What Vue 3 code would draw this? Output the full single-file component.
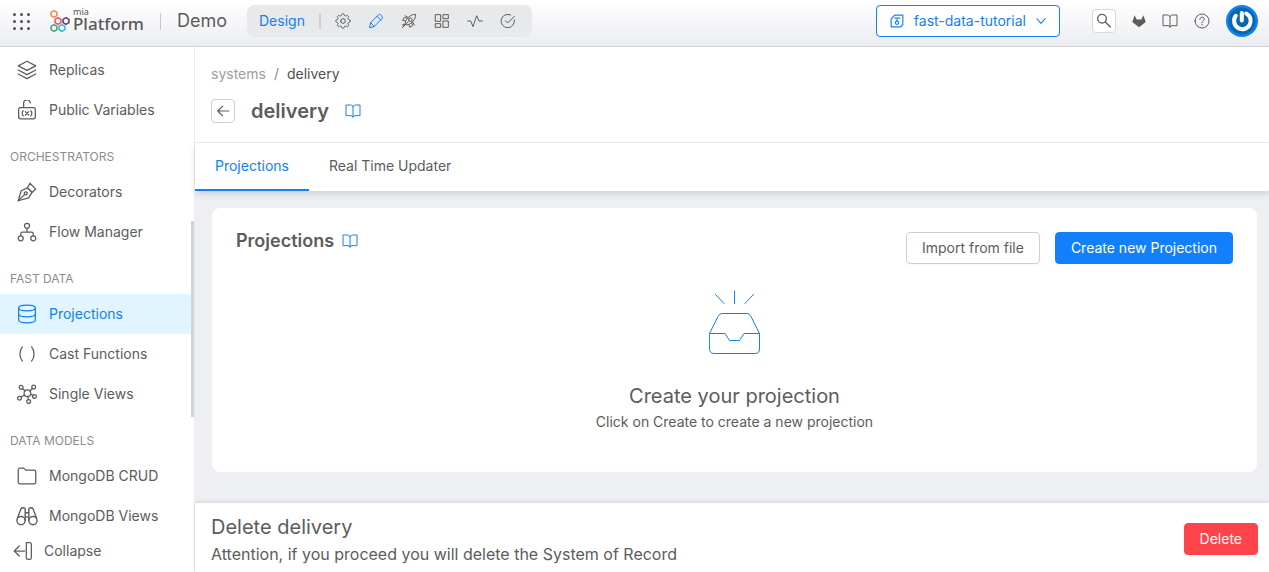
<script setup>
import { h } from 'vue'

const circle = (cx, cy, r) => `M${cx - r} ${cy}a${r} ${r} 0 1 0 ${2 * r} 0a${r} ${r} 0 1 0 ${-2 * r} 0z`

const cog = () => {
  const points = []
  for (let i = 0; i < 96; i++) {
    const t = (i / 96) * Math.PI * 2
    const r = 9.6 + 1.3 * Math.tanh(2 * Math.cos(8 * t))
    points.push(`${(12 + r * Math.cos(t)).toFixed(2)} ${(12 + r * Math.sin(t)).toFixed(2)}`)
  }
  return `M${points.join('L')}z`
}

const glyphs = {
  gear: [cog(), circle(12, 12, 3.5)],
  pencil: ['M2.500 21.500l1.500-7L15.500 3a2.500 2.500 0 0 1 3.500 0l2 2a2.500 2.500 0 0 1 0 3.500L9.500 20z', 'M13.500 5l5.500 5.500', 'M4 14.500l5.500 5.500'],
  rocket: ['M6.500 17.500c-1-3 .5-7 4-10.500C14 3.500 18 2 22 2c0 4-1.500 8-5 11.500-3.500 3.500-7.500 5-10.500 4z', circle(14, 10, 2.6), 'M9.500 8L5 6.500 2.500 11l4 1', 'M16 14.500l1.500 4.500-4.500 2.500-1-4', 'M6 4l5 3M20 18l-3-5', 'M2 22l4-4', 'M8 16l3-3', circle(4.200, 18, 1.200)],
  grid: ['M2.500 2.500h7.500v10H2.500z', 'M14 2.500h7.500v6H14z', 'M14 12h7.500v9.500H14z', 'M2.500 16h7.500v5.500H2.500z'],
  pulse: ['M1 12h4.500L9 20.500 14.500 4l3.500 8h5'],
  check: ['M21.500 10.500A10 10 0 1 1 16 3', 'M8 11.500l3.500 3.500L21.500 5'],
  revision: ['M2 8.500L8 2h14v16l-3.500 4H2z', 'M8 7h9', circle(12, 15, 2.800), 'M12 9.500v2.700'],
  chevron: ['M2 6.500l10 11 10-11'],
  search: [circle(9, 8.500, 6.500), 'M14 13.500L21.500 21'],
  book: ['M12 5C11 3.500 9.500 3 8 3H1.500v16H9c1.500 0 2.500.7 3 2 .5-1.300 1.500-2 3-2h7.500V3H16c-1.500 0-3 .5-4 2z', 'M12 5V21.500'],
  help: [circle(12, 12, 10.500), 'M8.800 9.500c0-2 1.400-3.300 3.300-3.300s3.300 1.300 3.300 3c0 2.500-3.300 2.500-3.300 5', 'M12 16.500v1.500'],
  layers: ['M12 1.500l10.500 5.500L12 12.500 1.500 7z', 'M1.500 12L12 17.500l10.500-5.500', 'M1.500 16.800L12 22.300l10.500-5.500'],
  lock: ['M4 9h16a2 2 0 0 1 2 2v9a2.500 2.500 0 0 1-2.500 2.500h-15A2.500 2.500 0 0 1 2 20v-9a2 2 0 0 1 2-2z', 'M8 9V4.500a4 4 0 0 1 8-1', 'M7.500 13c-1.700 1.500-1.700 4.500 0 6M16.500 13c1.700 1.500 1.700 4.500 0 6', 'M10 14l4 4M14 14l-4 4'],
  pen: ['M1.500 22.500L5 10.500l7.500-3.500 5.500 5.500-4 6.500z', circle(10.500, 13.500, 1.800), 'M1.500 22.500l7.700-7.700', 'M12.500 7l3-5.500 7 7-4.500 4z'],
  flow: [circle(12, 4.500, 3), circle(4.500, 19.500, 3), circle(19.500, 19.500, 3), 'M12 7.500v4.500M4.500 16.500V14a2 2 0 0 1 2-2h11a2 2 0 0 1 2 2v2.500'],
  database: ['M2 4.800C2 .3 22 .3 22 4.800S2 9.300 2 4.800z', 'M2 4.800v14.400c0 4.500 20 4.500 20 0V4.800', 'M2 12c0 4.500 20 4.500 20 0'],
  parens: ['M6.500 3.500c-4 5-4 12 0 17', 'M17.500 3.500c4 5 4 12 0 17'],
  network: [circle(12.500, 11, 4), circle(5, 4, 2.300), circle(20, 3.500, 2.300), circle(3, 17, 2.300), circle(21, 15, 2.300), circle(14, 21, 2.300), 'M6.700 5.600L9.700 8.200M18.500 5.400l-3 3M5 15.700l4-2.500M16.300 12.300l2.800 1.400M13 15l.6 3.700'],
  folder: ['M1.500 4.500a2 2 0 0 1 2-2H8L10.500 5H20.500a2 2 0 0 1 2 2v12.500a2 2 0 0 1-2 2h-17a2 2 0 0 1-2-2z'],
  binoculars: [circle(5.500, 17, 4.500), circle(18.500, 17, 4.500), 'M1.500 14.500L5.500 4c.5-1.300 4.500-1.300 4.500 0v13M22.500 14.500L18.500 4c-.5-1.300-4.500-1.300-4.500 0v13M10 8.500h4M10 13h4'],
  collapse: ['M14 12H1.500M7.500 6l-6 6 6 6', 'M16 2h4a2 2 0 0 1 2 2v16a2 2 0 0 1-2 2h-2a2 2 0 0 1-2-2z'],
  back: ['M22 12H3M11.500 3.500L3 12l8.500 8.500'],
}

const Icon = (props) =>
  h('svg', { viewBox: '0 0 24 24', 'aria-hidden': 'true' }, glyphs[props.name].map((d) => h('path', { d })))
Icon.props = ['name']

const areas = [
  { icon: 'gear', label: 'Settings' },
  { icon: 'pencil', label: 'Design', active: true },
  { icon: 'rocket', label: 'Deploy' },
  { icon: 'grid', label: 'Environments' },
  { icon: 'pulse', label: 'Monitoring' },
  { icon: 'check', label: 'Quality' },
]

const groups = [
  { items: [{ icon: 'layers', label: 'Replicas' }, { icon: 'lock', label: 'Public Variables' }] },
  { title: 'ORCHESTRATORS', items: [{ icon: 'pen', label: 'Decorators' }, { icon: 'flow', label: 'Flow Manager' }] },
  {
    title: 'FAST DATA',
    items: [
      { icon: 'database', label: 'Projections', active: true },
      { icon: 'parens', label: 'Cast Functions' },
      { icon: 'network', label: 'Single Views' },
    ],
  },
  { title: 'DATA MODELS', items: [{ icon: 'folder', label: 'MongoDB CRUD' }, { icon: 'binoculars', label: 'MongoDB Views' }] },
]

const hexagons = [
  { x: 4, y: 4, color: '#f0824f' },
  { x: 8, y: 11, color: '#e8505b' },
  { x: 16, y: 11, color: '#4f3a86' },
  { x: 4, y: 18, color: '#3fa66b' },
  { x: 12, y: 18, color: '#35b4dc' },
]
</script>

<template>
  <div class="shell">
    <header class="topbar">
      <button class="launcher" aria-label="Applications">
        <i v-for="n in 9" :key="n"></i>
      </button>
      <a class="brand" href="#" aria-label="mia Platform">
        <svg class="brand-mark" viewBox="0 0 20 23" aria-hidden="true">
          <path
            v-for="(hex, i) in hexagons"
            :key="i"
            :transform="`translate(${hex.x} ${hex.y})`"
            :stroke="hex.color"
            d="M0-3.300L2.900-1.700V1.700L0 3.300-2.900 1.700V-1.700z"
          />
        </svg>
        <span class="brand-text"><small>mia</small><strong>Platform</strong></span>
      </a>
      <span class="rule"></span>
      <span class="project">Demo</span>
      <nav class="areas" aria-label="Areas">
        <span class="area-name">Design</span>
        <span class="area-rule"></span>
        <a v-for="area in areas" :key="area.icon" href="#" :aria-label="area.label" :class="{ active: area.active }">
          <Icon :name="area.icon" class="icon-16" />
        </a>
      </nav>
      <div class="tools">
        <button class="branch">
          <Icon name="revision" class="icon-14" />
          <span>fast-data-tutorial</span>
          <Icon name="chevron" class="icon-10" />
        </button>
        <button class="search" aria-label="Search"><Icon name="search" class="icon-16" /></button>
        <a class="tool" href="#" aria-label="GitLab">
          <svg class="gitlab" viewBox="0 0 24 24" aria-hidden="true">
            <path d="M4.500 2l3.500 7.500h8L19.500 2l4 11.500L12 22.500.5 13.500z" />
          </svg>
        </a>
        <a class="tool" href="#" aria-label="Documentation"><Icon name="book" class="icon-16" /></a>
        <a class="tool" href="#" aria-label="Help"><Icon name="help" class="icon-16" /></a>
        <button class="avatar" aria-label="Account">
          <svg viewBox="0 0 32 32" aria-hidden="true">
            <circle cx="16" cy="16" r="16" fill="#0f80fa" />
            <circle cx="16" cy="16" r="13.500" fill="#0769ab" />
            <path d="M9.800 10.800a8.300 8.300 0 1 0 10.400-2.300" />
            <path d="M15.800 8v7.500" />
          </svg>
        </button>
      </div>
    </header>

    <div class="workspace">
      <aside class="sidebar">
        <div class="menu">
          <nav class="menu-list" aria-label="Design sections">
            <section v-for="(group, g) in groups" :key="g">
              <h2 v-if="group.title">{{ group.title }}</h2>
              <a v-for="item in group.items" :key="item.label" href="#" :class="{ active: item.active }">
                <Icon :name="item.icon" :class="item.icon === 'binoculars' ? 'icon-22' : 'icon-20'" />
                <span>{{ item.label }}</span>
              </a>
            </section>
          </nav>
          <div class="track"><div class="thumb"></div></div>
        </div>
        <button class="collapse"><Icon name="collapse" class="icon-20" /><span>Collapse</span></button>
      </aside>

      <main class="content">
        <div class="heading">
          <nav class="crumbs" aria-label="Breadcrumb">
            <a href="#">systems</a><i>/</i><span>delivery</span>
          </nav>
          <div class="title-row">
            <button class="back" aria-label="Back"><Icon name="back" class="icon-14" /></button>
            <h1>delivery</h1>
            <a class="doc" href="#" aria-label="Delivery documentation"><Icon name="book" class="icon-16" /></a>
          </div>
        </div>
        <div class="tabs" role="tablist">
          <button role="tab" aria-selected="true" class="active">Projections</button>
          <button role="tab" aria-selected="false">Real Time Updater</button>
        </div>

        <div class="body">
          <section class="card">
            <div class="card-head">
              <h2>Projections</h2>
              <a class="doc" href="#" aria-label="Projections documentation"><Icon name="book" class="icon-16" /></a>
              <div class="actions">
                <button class="btn">Import from file</button>
                <button class="btn primary">Create new Projection</button>
              </div>
            </div>
            <div class="empty">
              <svg class="inbox" viewBox="0 0 52 64" aria-hidden="true">
                <path d="M.5 43.500L9 26.500q1.500-3 4-3h25q2.500 0 4 3l8.500 17V59q0 4.500-4.500 4.500H5Q.5 63.500.5 59z" />
                <path d="M.5 43.500h15.500l4.500 7h10l4.500-7h15.500M6.500 4.500l8.500 9M25.500 1v12.500M44.500 4.500l-8.500 9" />
              </svg>
              <h3>Create your projection</h3>
              <p>Click on Create to create a new projection</p>
            </div>
          </section>
        </div>

        <footer class="danger">
          <div>
            <h2>Delete delivery</h2>
            <p>Attention, if you proceed you will delete the System of Record</p>
          </div>
          <button class="btn red">Delete</button>
        </footer>
      </main>
    </div>
  </div>
</template>

<style>
body {
  background: #fff;
}
</style>

<style scoped>
.shell {
  height: 100vh;
  display: flex;
  flex-direction: column;
  font-family: Inter, "Liberation Sans", sans-serif;
  font-size: 14px;
  line-height: 22px;
  color: #5c5c5c;
  overflow: hidden;
}
.shell * {
  box-sizing: border-box;
}
h1, h2, h3, p {
  margin: 0;
  font-weight: 400;
}
button {
  font: inherit;
  color: inherit;
  margin: 0;
  padding: 0;
  border: 0;
  background: none;
  cursor: pointer;
}
a {
  color: inherit;
  text-decoration: none;
}
svg {
  display: block;
  flex: none;
  fill: none;
  stroke: currentColor;
  stroke-width: 1.5;
  stroke-linejoin: round;
  stroke-linecap: round;
}
.icon-10 { width: 10px; height: 10px; stroke-width: 2.5; }
.icon-14 { width: 14px; height: 14px; stroke-width: 2; }
.icon-16 { width: 16px; height: 16px; }
.icon-20 { width: 20px; height: 20px; }
.icon-22 { width: 22px; height: 22px; }

.topbar {
  flex: none;
  display: flex;
  align-items: center;
  height: 47px;
  padding: 0 11px 4px 13px;
  border-bottom: 1px solid #d0d1d4;
  background: linear-gradient(#fff, #ecedf1);
}
.launcher {
  display: grid;
  grid-template-columns: repeat(3, 3px);
  gap: 4px;
}
.launcher i {
  width: 3px;
  height: 3px;
  border-radius: 50%;
  background: #505050;
}
.brand {
  display: flex;
  align-items: center;
  gap: 3px;
  margin-left: 20px;
}
.brand-mark {
  width: 20px;
  height: 23px;
  stroke-width: 1.5;
}
.brand-text {
  display: flex;
  flex-direction: column;
  padding-bottom: 4px;
  font-family: "Noto Sans", sans-serif;
  color: #58595b;
}
.brand-text small {
  font-size: 9px;
  line-height: 9px;
}
.brand-text strong {
  font-size: 17px;
  line-height: 16px;
  font-weight: 500;
}
.rule {
  width: 1px;
  height: 17px;
  margin: 0 16px;
  background: #c9cacc;
}
.project {
  font-size: 18px;
}
.areas {
  display: flex;
  align-items: center;
  gap: 17px;
  height: 32px;
  margin-left: 20px;
  padding: 0 16px 0 12px;
  border-radius: 8px;
  background: #e8e9eb;
}
.area-name,
.areas .active {
  color: #1280fa;
}
.area-rule {
  width: 2px;
  height: 16px;
  margin: 0 -3px;
  background: #cfd0d2;
}
.tools {
  display: flex;
  align-items: center;
  gap: 16px;
  margin-left: auto;
}
.branch {
  display: flex;
  align-items: center;
  gap: 10px;
  height: 32px;
  margin-right: 16px;
  padding: 0 13px;
  border: 1px solid #1280fa;
  border-radius: 4px;
  background: #fff;
  color: #1280fa;
}
.search {
  display: grid;
  place-items: center;
  width: 24px;
  height: 24px;
  border: 1px solid #d9d9d9;
  border-radius: 4px;
  background: #fff;
}
.search svg {
  stroke-width: 2;
}
.gitlab {
  width: 14px;
  height: 14px;
  fill: currentColor;
  stroke: none;
}
.avatar svg {
  width: 32px;
  height: 32px;
  stroke: #fff;
  stroke-width: 4;
}
.avatar circle {
  stroke: none;
}

.workspace {
  flex: 1;
  min-height: 0;
  display: flex;
}
.sidebar {
  flex: none;
  width: 195px;
  display: flex;
  flex-direction: column;
  border-right: 1px solid #ebecee;
}
.menu {
  flex: 1;
  min-height: 0;
  display: flex;
  overflow: hidden;
}
.menu-list {
  flex: 1;
  padding-top: 3px;
}
.menu-list h2 {
  padding: 12px 10px 0;
  font-size: 12px;
  line-height: 30px;
  color: #8c8c8c;
}
.menu-list a {
  display: flex;
  align-items: center;
  gap: 12px;
  height: 40px;
  padding-left: 17px;
}
.menu-list .icon-22 {
  margin: 0 -1px;
}
.menu-list .active {
  background: #e0f5ff;
  color: #1280fa;
}
.track {
  width: 3px;
  padding-top: 174px;
}
.thumb {
  height: 196px;
  background: #d3d4d5;
}
.collapse {
  flex: none;
  display: flex;
  align-items: center;
  gap: 11px;
  height: 42px;
  padding-left: 13px;
  background: #fff;
}

.content {
  flex: 1;
  min-width: 0;
  display: flex;
  flex-direction: column;
  background: #eeeff3;
}
.heading {
  padding: 16px 16px 15px;
  border-bottom: 1px solid #ececee;
  background: #fff;
}
.crumbs {
  display: flex;
  gap: 8px;
}
.crumbs a {
  color: #9d9d9d;
}
.crumbs i {
  font-style: normal;
  color: #8c8c8c;
}
.crumbs span {
  color: #505050;
}
.title-row {
  display: flex;
  align-items: center;
  margin-top: 10px;
}
.back {
  display: grid;
  place-items: center;
  width: 24px;
  height: 24px;
  border: 1px solid #cfcfcf;
  border-radius: 4px;
}
h1 {
  margin: 0 16px;
  font-size: 20px;
  line-height: 32px;
  font-weight: 600;
}
.doc {
  color: #1280fa;
}
.tabs {
  flex: none;
  display: flex;
  height: 48px;
  background: #fff;
  box-shadow: 0 3px 6px rgba(0, 0, 0, 0.12);
}
.tabs button {
  padding: 0 20px;
  border-bottom: 2px solid transparent;
}
.tabs .active {
  border-color: #1280fa;
  color: #1280fa;
}
.body {
  flex: 1;
  min-height: 0;
  padding: 17px 12px 31px 17px;
}
.card {
  height: 100%;
  padding: 24px;
  border-radius: 8px;
  background: #fff;
}
.card-head {
  display: flex;
  align-items: flex-start;
  gap: 8px;
  height: 32px;
}
.card-head h2 {
  font-size: 18px;
  line-height: 18px;
  font-weight: 600;
}
.card-head .doc {
  padding-top: 1px;
}
.actions {
  display: flex;
  gap: 15px;
  margin-left: auto;
}
.btn {
  height: 32px;
  padding: 0 15px;
  border: 1px solid #d0d0d0;
  border-radius: 4px;
  background: #fff;
  box-shadow: 0 2px 0 rgba(0, 0, 0, 0.02);
}
.btn.primary {
  border-color: #1280fa;
  background: #1280fa;
  color: #fff;
}
.btn.red {
  border-color: #ff434b;
  background: #ff434b;
  color: #fff;
}
.empty {
  display: flex;
  flex-direction: column;
  align-items: center;
  padding-top: 26px;
}
.inbox {
  width: 52px;
  height: 64px;
  color: #1280fa;
  stroke-width: 1;
}
.empty h3 {
  margin-top: 28px;
  font-size: 20px;
  line-height: 28px;
}
.empty p {
  line-height: 24px;
}
.danger {
  flex: none;
  display: flex;
  align-items: center;
  justify-content: space-between;
  padding: 10px 11px 5px 16px;
  background: #fff;
  box-shadow: 0 -1px 4px rgba(0, 0, 0, 0.12);
}
.danger .btn {
  margin-bottom: 2px;
}
.danger h2 {
  font-size: 20px;
  line-height: 28px;
}
.danger p {
  font-size: 16px;
  line-height: 26px;
}
</style>
